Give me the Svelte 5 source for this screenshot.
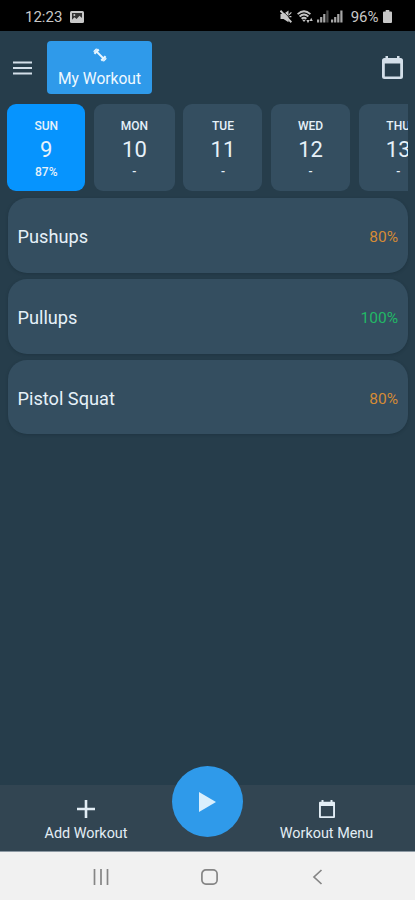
<script lang="ts">
  type Day = { name: string; date: number; progress: string };
  type Exercise = { name: string; percent: number };

  const days: Day[] = [
    { name: "SUN", date: 9, progress: "87%" },
    { name: "MON", date: 10, progress: "-" },
    { name: "TUE", date: 11, progress: "-" },
    { name: "WED", date: 12, progress: "-" },
    { name: "THU", date: 13, progress: "-" },
  ];

  const exercises: Exercise[] = [
    { name: "Pushups", percent: 80 },
    { name: "Pullups", percent: 100 },
    { name: "Pistol Squat", percent: 80 },
  ];

  let selected = $state(9);
</script>

{#snippet signal(strength: number)}
  <svg width="12" height="13" viewBox="0 0 12 13" aria-hidden="true">
    {#each [3, 5.5, 8.5, 12] as height, index}
      <rect
        x={index * 3.1}
        y={12.5 - height}
        width="2.2"
        {height}
        fill="#c4c4c4"
        opacity={index < strength ? 0.85 : 0.4}
      />
    {/each}
  </svg>
{/snippet}

<div class="screen">
  <div class="status-bar">
    <span class="clock">12:23</span>
    <svg class="picture" width="14" height="12" viewBox="0 0 14 12" aria-hidden="true">
      <rect width="14" height="12" rx="1.5" fill="#c8c8c8" />
      <path d="M2 2h10v5L9.5 4.8 6.6 8 4.5 6.3 2 8.8z" fill="#333" />
      <circle cx="4.3" cy="4" r="1" fill="#c8c8c8" />
    </svg>
    <div class="status-icons">
      <svg width="12" height="13" viewBox="0 0 12 13" aria-hidden="true">
        <path d="M.5 4h3L8.5.4v11.8L3.5 9h-3z" fill="#c8c8c8" />
        <path d="M2 0l10 10.4" stroke="#000" stroke-width="0.8" />
        <path d="M.4.8l11 11.4" stroke="#c8c8c8" stroke-width="2" />
        <path d="M9 4.8l2.4-2.4M9.4 6.6h2" stroke="#c8c8c8" stroke-width="1.2" />
      </svg>
      <svg class="wifi" width="16" height="14" viewBox="0 0 16 14" aria-hidden="true">
        <g fill="none" stroke="#c4c4c4" stroke-width="1.8">
          <path d="M.6 4.2Q7-1.7 13.4 4.2" />
          <path d="M2.6 6.5Q7 2.5 11.4 6.5" />
          <path d="M4.6 8.8Q7 6.7 9.4 8.8" />
        </g>
        <path d="M5.2 9.8h3.6L7 12z" fill="#c4c4c4" />
        <path d="M9.4 10h3.2L11 13.2zM12.6 11h3.2l-1.6-3.2z" fill="#c4c4c4" />
      </svg>
      {@render signal(3)}
      {@render signal(4)}
      <span class="battery-level">96%</span>
      <svg class="battery" width="9" height="13" viewBox="0 0 9 13" aria-hidden="true">
        <path d="M2.7 0h3.6v1.5H8q1 0 1 1V12q0 1-1 1H1q-1 0-1-1V2.5q0-1 1-1h1.7z" fill="#c8c8c8" />
      </svg>
    </div>
  </div>

  <header>
    <button aria-label="Menu">
      <svg width="19" height="14" viewBox="0 0 19 14" aria-hidden="true">
        <path d="M0 1.5h19M0 7h19M0 12.5h19" stroke="#d3dfe9" stroke-width="2" />
      </svg>
    </button>
    <button class="plan">
      <svg width="14" height="14" viewBox="0 0 14 14" aria-hidden="true">
        <g stroke="#e8f6ff" fill="none">
          <path d="M3.5 3.5l7 7" stroke-width="1.8" />
          <path d="M1.4 5.7l4.3-4.3M8.3 12.6l4.3-4.3" stroke-width="2.2" />
          <path d="M.7 3.7l3-3M10.3 13.3l3-3" stroke-width="1.4" />
        </g>
      </svg>
      <span>My Workout</span>
    </button>
    <button class="calendar" aria-label="Calendar">
      <svg width="21" height="24" viewBox="0 0 21 24" aria-hidden="true">
        <path
          fill="currentColor"
          fill-rule="evenodd"
          d="M3.5 0H6v2h9V0h2.5v2h1A2.5 2.5 0 0 1 21 4.5v16a2.5 2.5 0 0 1-2.5 2.5h-16A2.5 2.5 0 0 1 0 20.5v-16A2.5 2.5 0 0 1 2.5 2h1zM2.8 7.5v13h15.4v-13z"
        />
      </svg>
    </button>
  </header>

  <div class="days">
    {#each days as day}
      <button class="day" class:active={day.date === selected} onclick={() => (selected = day.date)}>
        <span class="day-name">{day.name}</span>
        <span class="date">{day.date}</span>
        <span class="progress">{day.progress}</span>
      </button>
    {/each}
  </div>

  <main>
    {#each exercises as exercise}
      <article class="exercise">
        <span>{exercise.name}</span>
        <span class="percent" class:done={exercise.percent === 100}>{exercise.percent}%</span>
      </article>
    {/each}
  </main>

  <footer>
    <button class="action">
      <svg width="18" height="18" viewBox="0 0 18 18" aria-hidden="true">
        <path d="M9 0v18M0 9h18" stroke="currentColor" stroke-width="2.6" />
      </svg>
      <span>Add Workout</span>
    </button>
    <button class="play" aria-label="Start workout">
      <svg width="17" height="20" viewBox="0 0 17 20" aria-hidden="true">
        <path d="M0 0l17 10L0 20z" fill="#d9effd" />
      </svg>
    </button>
    <button class="action">
      <svg width="16" height="18" viewBox="0 0 16 18" aria-hidden="true">
        <path
          fill="currentColor"
          fill-rule="evenodd"
          d="M2.5 0h2v1.7h7V0h2v1.7H15q1 0 1 1V17q0 1-1 1H1q-1 0-1-1V2.7q0-1 1-1h1.5zM1.9 6v10.2h12.2V6z"
        />
      </svg>
      <span>Workout Menu</span>
    </button>
  </footer>

  <nav>
    <svg width="16" height="16" viewBox="0 0 16 16" aria-hidden="true">
      <path d="M1.5 0v16M8 0v16M14.5 0v16" />
    </svg>
    <svg width="17" height="16" viewBox="0 0 17 16" aria-hidden="true">
      <rect x=".9" y=".9" width="15.2" height="14.2" rx="4" />
    </svg>
    <svg width="16" height="16" viewBox="0 0 16 16" aria-hidden="true">
      <path d="M11.5 1L4 8l7.5 7" />
    </svg>
  </nav>
</div>

<style>
  :global(body) {
    margin: 0;
    background: #263d4b;
  }

  .screen {
    display: flex;
    flex-direction: column;
    width: 415px;
    height: 900px;
    overflow: hidden;
    background: #263d4b;
    color: #e6f1f9;
    font-family: Roboto, sans-serif;
  }

  button {
    margin: 0;
    padding: 0;
    border: 0;
    background: none;
    color: inherit;
    font: inherit;
  }

  svg {
    display: block;
    flex: none;
  }

  .status-bar {
    display: flex;
    align-items: center;
    flex: none;
    box-sizing: border-box;
    height: 31px;
    padding: 2px 23.5px 0 25px;
    background: #000000;
    color: #c8c8c8;
    font-size: 15px;
  }

  .clock {
    width: 38px;
  }

  .picture {
    margin-left: 7px;
  }

  .status-icons {
    display: flex;
    align-items: center;
    gap: 2px;
    margin-left: auto;
  }

  .wifi {
    margin: 0 2px 0 3px;
  }

  .battery-level {
    margin-left: 6px;
  }

  .battery {
    margin-left: 2px;
  }

  header {
    display: flex;
    align-items: center;
    flex: none;
    box-sizing: border-box;
    height: 73px;
    padding: 0 12px 0 13px;
  }

  .plan {
    display: flex;
    flex-direction: column;
    align-items: center;
    box-sizing: border-box;
    width: 105px;
    height: 53px;
    margin-left: 15px;
    padding-top: 7px;
    border-radius: 4px;
    background: #2f9aea;
    color: #f0f9ff;
    font-size: 15.6px;
    line-height: 18px;
  }

  .plan span {
    margin-top: 8px;
    white-space: nowrap;
  }

  .calendar {
    margin: 1px 0 0 auto;
    color: #d3dfe9;
  }

  .days {
    display: grid;
    grid-template-columns: 78px 81px 79px 79px 79px;
    gap: 8.6px;
    flex: none;
    height: 87px;
    margin: 0.4px 7px 0 7.3px;
    overflow: hidden;
  }

  .day {
    display: flex;
    flex-direction: column;
    align-items: center;
    padding-top: 15px;
    border-radius: 9px;
    background: #344e60;
  }

  .day.active {
    background: #0694fe;
  }

  .day-name {
    font-size: 12px;
    font-weight: 500;
    line-height: 14px;
  }

  .date {
    margin-top: 4px;
    font-size: 22px;
    line-height: 26px;
  }

  .progress {
    margin-top: 2px;
    font-size: 12px;
    font-weight: 500;
    line-height: 14px;
  }

  main {
    display: flex;
    flex: 1;
    flex-direction: column;
    gap: 6px;
    padding: 7px 7px 0 7.5px;
  }

  .exercise {
    display: flex;
    align-items: center;
    justify-content: space-between;
    box-sizing: border-box;
    height: 74.7px;
    padding: 2px 10px 0;
    border-radius: 19px;
    background: #344e60;
    box-shadow: 0 1px 3px rgba(20, 38, 50, 0.35);
    font-size: 18.2px;
  }

  .percent {
    padding-top: 1px;
    color: #d58b35;
    font-size: 15.5px;
  }

  .percent.done {
    color: #22b866;
  }

  footer {
    display: grid;
    grid-template-columns: 172px 71px 167px;
    flex: none;
    height: 66px;
    background: #324552;
    border-bottom: 1px solid #8c99a3;
  }

  .action {
    display: flex;
    flex-direction: column;
    align-items: center;
    justify-content: flex-end;
    gap: 7px;
    padding-bottom: 8px;
    color: #e2edf5;
    font-size: 14.4px;
    line-height: 18px;
  }

  .play {
    display: flex;
    align-items: center;
    justify-content: center;
    width: 71px;
    height: 71px;
    margin-top: -19px;
    border-radius: 50%;
    background: #2f9aea;
  }

  nav {
    display: flex;
    align-items: center;
    justify-content: space-between;
    flex: none;
    box-sizing: border-box;
    height: 48px;
    padding: 2px 89px 0 93px;
    background: #f1f1f1;
  }

  nav svg {
    fill: none;
    stroke: #858585;
    stroke-width: 1.7;
  }
</style>
